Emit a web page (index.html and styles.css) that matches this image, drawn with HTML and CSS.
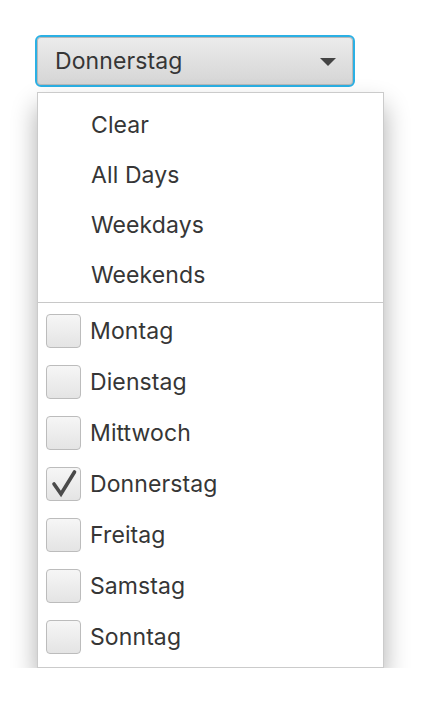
FILE: index.html
```html
<!DOCTYPE html>
<html>
<head>
<meta charset="utf-8">
<link rel="stylesheet" href="styles.css">
</head>
<body>
<div class="stage">
  <div class="combo">
    <span class="combo-label">Donnerstag</span>
    <span class="arrow"></span>
  </div>
  <div class="popup">
    <div class="group">
      <div class="item">Clear</div>
      <div class="item">All Days</div>
      <div class="item">Weekdays</div>
      <div class="item">Weekends</div>
    </div>
    <div class="sep"></div>
    <div class="group">
      <div class="check-row"><span class="box"></span><span>Montag</span></div>
      <div class="check-row"><span class="box"></span><span>Dienstag</span></div>
      <div class="check-row"><span class="box"></span><span>Mittwoch</span></div>
      <div class="check-row"><span class="box"><svg width="35" height="34" viewBox="0 0 35 34"><path d="M8 17 L15 27 L28.5 5" fill="none" stroke="#4a4a4a" stroke-width="3.6" stroke-linecap="round" stroke-linejoin="miter"/></svg></span><span>Donnerstag</span></div>
      <div class="check-row"><span class="box"></span><span>Freitag</span></div>
      <div class="check-row"><span class="box"></span><span>Samstag</span></div>
      <div class="check-row"><span class="box"></span><span>Sonntag</span></div>
    </div>
  </div>
</div>
</body>
</html>
```
FILE: styles.css
```css
* { box-sizing: border-box; }
html, body { margin: 0; background: #fff; }
body {
  font-family: Inter, "Liberation Sans", sans-serif;
  font-size: 23px;
  color: #363636;
  letter-spacing: 0.1px;
}
.stage {
  padding: 35px 0 0 35px;
}
.combo {
  width: 320px;
  height: 52px;
  border: 2px solid #2bb0e4;
  border-radius: 6px;
  display: flex;
  align-items: center;
  justify-content: space-between;
  padding: 0 17px 0 18px;
  background: linear-gradient(#ececec, #d5d5d5);
  box-shadow: inset 0 0 0 1px #b9b9b9;
}
.arrow {
  width: 0; height: 0;
  border-left: 8px solid transparent;
  border-right: 8px solid transparent;
  border-top: 8px solid #444;
  margin-top: 2px;
}
.popup {
  margin: 5px 0 0 2px;
  width: 347px;
  border: 1px solid #cbcbcb;
  background: #fff;
  padding: 7px 0 5px;
  box-shadow: 0 14px 24px rgba(0,0,0,0.32);
}
.item {
  height: 50px;
  display: flex;
  align-items: center;
  padding-left: 53px;
}
.sep {
  height: 1px;
  background: #c8c8c8;
  margin: 2px 0 2px;
}
.check-row {
  height: 51px;
  display: flex;
  align-items: center;
  padding-left: 8px;
  gap: 9px;
}
.box {
  width: 35px;
  height: 34px;
  border: 1px solid #bcbcbc;
  border-radius: 4px;
  background: linear-gradient(#f6f6f6, #e4e4e4);
  position: relative;
  flex: none;
}
.box svg { display: block; position: absolute; left: -1px; top: -1px; }
```
